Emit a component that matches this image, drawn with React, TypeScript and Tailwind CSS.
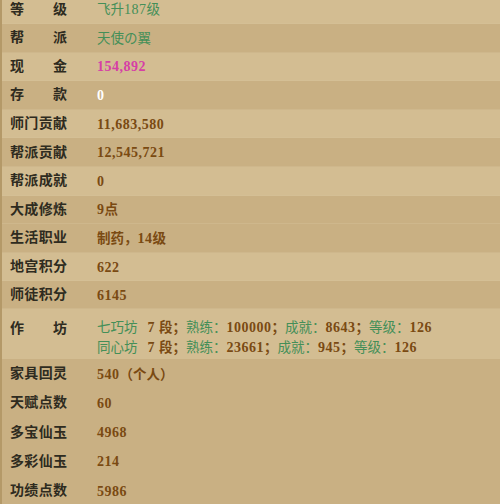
import React from "react";

const LIGHT = "bg-[#d3bd92]";
const DARK = "bg-[#c9b083]";

function Runs({ text }: { text: string }) {
  const parts = text.match(/[\x00-\x7f]+|[^\x00-\x7f]+/g) || [];
  return (
    <>
      {parts.map((p, i) =>
        /^[\x00-\x7f]+$/.test(p) ? (
          <span key={i} className="text-[14px] tracking-[0.5px]" style={{ fontFamily: '"Liberation Serif", serif' }}>
            {p}
          </span>
        ) : (
          <span key={i} className="text-[13.5px]">
            {p}
          </span>
        )
      )}
    </>
  );
}

const G = ({ t }: { t: string }) => (
  <span className="text-[#448f58] font-normal">
    <Runs text={t} />
  </span>
);
const B = ({ t }: { t: string }) => (
  <span className="text-[#7a4a12] font-bold">
    <Runs text={t} />
  </span>
);

type Row = { label: string; value: React.ReactNode; bg: string; h: string };

const Label = ({ text }: { text: string }) => {
  const chars = text.split("");
  return (
    <div className="w-[57px] flex justify-between text-[14px] font-bold text-[#2e2b20] shrink-0">
      {chars.map((c, i) => (
        <span key={i}>{c}</span>
      ))}
    </div>
  );
};

export default function App() {
  const rows: Row[] = [
    { label: "等级", value: <G t="飞升187级" />, bg: LIGHT, h: "h-[29px]" },
    { label: "帮派", value: <G t="天使の翼" />, bg: DARK, h: "h-[28.6px]" },
    {
      label: "现金",
      value: (
        <span className="text-[#d63fa6] font-bold">
          <Runs text="154,892" />
        </span>
      ),
      bg: LIGHT,
      h: "h-[28.6px]",
    },
    {
      label: "存款",
      value: (
        <span className="text-white font-bold">
          <Runs text="0" />
        </span>
      ),
      bg: DARK,
      h: "h-[28.6px]",
    },
    { label: "师门贡献", value: <B t="11,683,580" />, bg: LIGHT, h: "h-[28.6px]" },
    { label: "帮派贡献", value: <B t="12,545,721" />, bg: DARK, h: "h-[28.6px]" },
    { label: "帮派成就", value: <B t="0" />, bg: LIGHT, h: "h-[28.6px]" },
    { label: "大成修炼", value: <B t="9点" />, bg: DARK, h: "h-[28.6px]" },
    { label: "生活职业", value: <B t="制药，14级" />, bg: DARK, h: "h-[28.6px]" },
    { label: "地宫积分", value: <B t="622" />, bg: LIGHT, h: "h-[28.6px]" },
    { label: "师徒积分", value: <B t="6145" />, bg: DARK, h: "h-[27.6px]" },
  ];
  const bottom: { label: string; value: React.ReactNode }[] = [
    { label: "家具回灵", value: <B t="540（个人）" /> },
    { label: "天赋点数", value: <B t="60" /> },
    { label: "多宝仙玉", value: <B t="4968" /> },
    { label: "多彩仙玉", value: <B t="214" /> },
    { label: "功绩点数", value: <B t="5986" /> },
  ];
  return (
    <div
      className="w-[500px] h-[504px] overflow-hidden bg-[#c9b083] border-l-2 border-[#b49968]"
      style={{ fontFamily: '"Liberation Serif", "Noto Sans CJK SC", serif' }}
    >
      <div className="mt-[-5px]">
        {rows.map((r, i) => (
          <div key={i} className={`${r.bg} ${r.h} flex items-center pl-[8px] border-b border-[#d8c49c]/40`}>
            <Label text={r.label} />
            <div className="pl-[30px] leading-none">{r.value}</div>
          </div>
        ))}
        <div className={`${LIGHT} h-[50px] flex items-start pl-[8px] pt-[8px]`}>
          <div className="pt-[1px]">
            <Label text="作坊" />
          </div>
          <div className="pl-[30px] leading-[19px]">
            <div>
              <G t="七巧坊" />
              <span className="inline-block w-[10px]" />
              <B t="7 段；" />
              <G t="熟练：" />
              <B t="100000；" />
              <G t="成就：" />
              <B t="8643；" />
              <G t="等级：" />
              <B t="126" />
            </div>
            <div>
              <G t="同心坊" />
              <span className="inline-block w-[10px]" />
              <B t="7 段；" />
              <G t="熟练：" />
              <B t="23661；" />
              <G t="成就：" />
              <B t="945；" />
              <G t="等级：" />
              <B t="126" />
            </div>
          </div>
        </div>
        {bottom.map((r, i) => (
          <div key={i} className={`${DARK} h-[29.3px] flex items-center pl-[8px]`}>
            <Label text={r.label} />
            <div className="pl-[30px] leading-none">{r.value}</div>
          </div>
        ))}
      </div>
    </div>
  );
}
